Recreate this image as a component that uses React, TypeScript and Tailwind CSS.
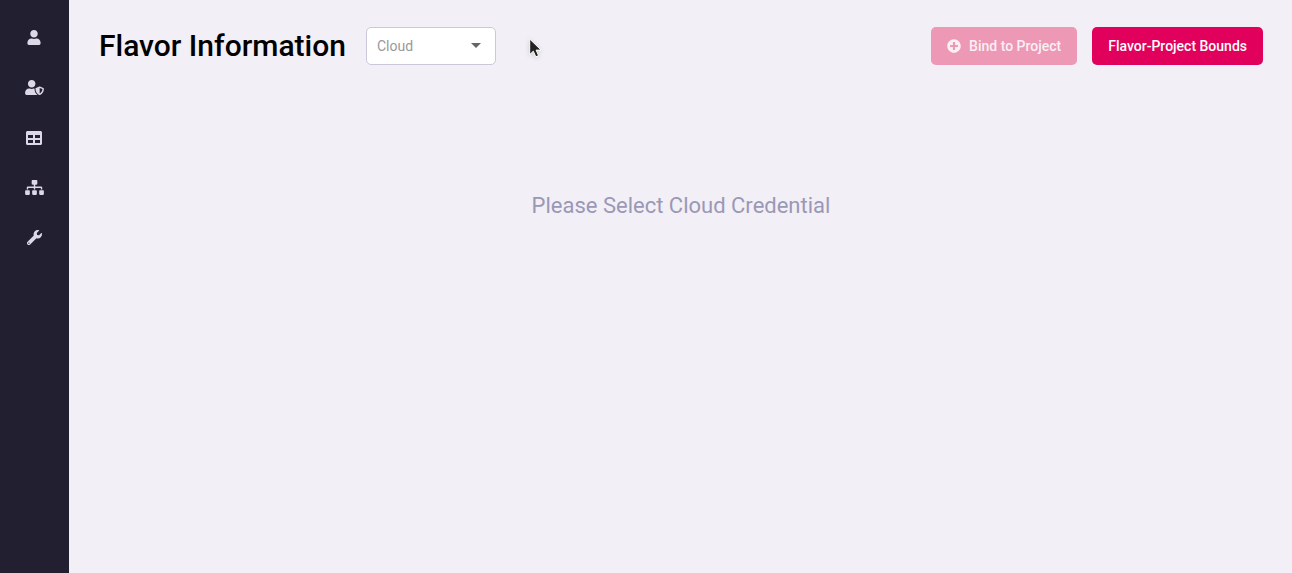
import { FaPlusCircle, FaSitemap, FaTable, FaUser, FaUserShield, FaWrench } from "react-icons/fa";

const links = [
  { label: "Users", href: "#users", Icon: FaUser, size: "h-[15px] w-3.5" },
  { label: "User roles", href: "#roles", Icon: FaUserShield, size: "h-[15px] w-[19px]" },
  { label: "Flavors", href: "#flavors", Icon: FaTable, size: "size-4" },
  { label: "Projects", href: "#projects", Icon: FaSitemap, size: "h-[15px] w-[19px]" },
  { label: "Settings", href: "#settings", Icon: FaWrench, size: "size-[15px]" },
];

function Sidebar() {
  return (
    <nav aria-label="Main" className="flex w-[69px] shrink-0 flex-col gap-px bg-[#221f30] pt-[13px] pr-px">
      {links.map(({ label, href, Icon, size }) => (
        <a
          key={label}
          href={href}
          aria-label={label}
          className="flex h-[49px] items-center justify-center text-[#dcd8e8]"
        >
          <Icon className={size} aria-hidden="true" />
        </a>
      ))}
    </nav>
  );
}

function CloudSelect() {
  return (
    <div className="relative w-[130px]">
      <select
        aria-label="Cloud"
        defaultValue=""
        className="h-[38px] w-full appearance-none rounded-[5px] border border-[#cbc8da] bg-white px-2.5 text-sm text-[#999999]"
      >
        <option value="">Cloud</option>
      </select>
      <svg
        viewBox="0 0 10 5"
        aria-hidden="true"
        className="pointer-events-none absolute top-4 right-[15px] h-[5px] w-2.5 fill-[#666666]"
      >
        <path d="M0 0h10L5 5z" />
      </svg>
    </div>
  );
}

function Pointer() {
  return (
    <svg
      viewBox="0 0 14 20"
      aria-hidden="true"
      className="pointer-events-none absolute top-[38px] left-[529px] h-5 w-3.5 drop-shadow-sm"
    >
      <path
        d="M.7 1v15.6l3.6-3.4 2.5 5.6 2.8-1.2-2.5-5.5h5z"
        fill="#222222"
        stroke="#ffffff"
        strokeWidth="1"
      />
    </svg>
  );
}

export default function App() {
  return (
    <div className="relative flex min-h-screen bg-[#f2eff7] font-['Roboto',sans-serif]">
      <Sidebar />
      <main className="min-w-0 flex-1 pt-[27px] pr-[29px] pl-[30px]">
        <header className="flex flex-wrap items-center justify-between gap-4">
          <div className="flex items-center gap-5">
            <h1 className="text-[30px] leading-[38px] font-medium text-black">Flavor Information</h1>
            <CloudSelect />
          </div>
          <div className="flex gap-[15px]">
            <button
              type="button"
              disabled
              className="flex h-[38px] items-center gap-2 rounded-[5px] bg-[#ed98b4] px-4 text-sm font-medium text-[#faeff5]"
            >
              <FaPlusCircle className="size-3.5" aria-hidden="true" />
              Bind to Project
            </button>
            <button
              type="button"
              className="h-[38px] rounded-[5px] bg-[#e1005c] px-4 text-sm font-medium text-white"
            >
              Flavor-Project Bounds
            </button>
          </div>
        </header>
        <p className="mt-[126px] text-center text-[22px] leading-[30px] text-[#9b98b5]">
          Please Select Cloud Credential
        </p>
      </main>
      <Pointer />
    </div>
  );
}
